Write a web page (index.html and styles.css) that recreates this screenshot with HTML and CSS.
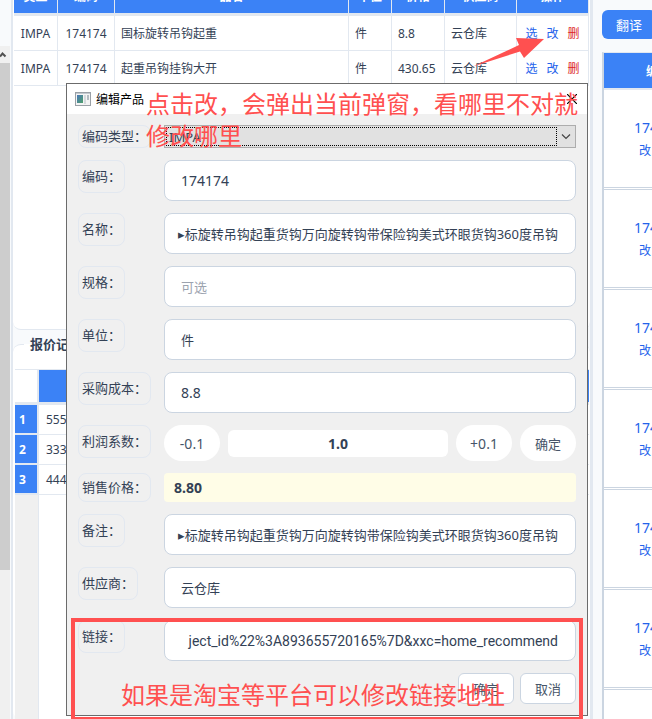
FILE: index.html
```html
<!DOCTYPE html>
<html lang="zh-CN">
<head>
  <meta charset="UTF-8">
  <title>编辑产品</title>
  <meta name="viewport" content="width=device-width, initial-scale=1.0">
  <link rel="stylesheet" href="styles.css">
</head>
<body>
  <div class="app">
    <!-- 左侧滚动条 -->
    <div class="scrollbar">
      <div class="scroll-up">
        <svg width="10" height="17" viewBox="0 0 10 17"><path d="M0 10.500 2.500 7.500 5.500 10.500" fill="none" stroke="#505050" stroke-width="2"/></svg>
      </div>
      <div class="scroll-thumb"></div>
    </div>

    <main class="main">
      <section class="products">
        <table class="product-table">
          <thead>
            <tr>
              <th class="c-type">类型</th>
              <th class="c-code">编码</th>
              <th>品名</th>
              <th class="c-unit">单位</th>
              <th class="c-price">价格</th>
              <th class="c-supplier">供应商</th>
              <th class="c-action">操作</th>
            </tr>
          </thead>
          <tbody>
            <tr>
              <td class="center">IMPA</td>
              <td class="center">174174</td>
              <td>国标旋转吊钩起重</td>
              <td>件</td>
              <td>8.8</td>
              <td>云仓库</td>
              <td><div class="actions"><a href="#">选</a><a href="#">改</a><a href="#" class="del">删</a></div></td>
            </tr>
            <tr>
              <td class="center">IMPA</td>
              <td class="center">174174</td>
              <td>起重吊钩挂钩大开</td>
              <td>件</td>
              <td>430.65</td>
              <td>云仓库</td>
              <td><div class="actions"><a href="#">选</a><a href="#">改</a><a href="#" class="del">删</a></div></td>
            </tr>
          </tbody>
        </table>
      </section>

      <fieldset class="quotes">
        <legend>报价记录</legend>
        <table class="quote-table">
          <thead>
            <tr><td class="corner"></td><th></th></tr>
          </thead>
          <tbody>
            <tr><th scope="row">1</th><td>555</td></tr>
            <tr><th scope="row">2</th><td>333</td></tr>
            <tr><th scope="row">3</th><td>444</td></tr>
          </tbody>
        </table>
        <div class="quote-rest"></div>
      </fieldset>
    </main>

    <aside class="side">
      <button type="button" class="translate">翻译</button>
      <table class="side-table">
        <thead><tr><th>编码</th></tr></thead>
        <tbody>
          <tr><td><a href="#" class="code">174174</a><div class="actions"><a href="#">改</a><a href="#" class="del">删</a></div></td></tr>
          <tr><td><a href="#" class="code">174174</a><div class="actions"><a href="#">改</a><a href="#" class="del">删</a></div></td></tr>
          <tr><td><a href="#" class="code">174174</a><div class="actions"><a href="#">改</a><a href="#" class="del">删</a></div></td></tr>
          <tr><td><a href="#" class="code">174174</a><div class="actions"><a href="#">改</a><a href="#" class="del">删</a></div></td></tr>
          <tr><td><a href="#" class="code">174174</a><div class="actions"><a href="#">改</a><a href="#" class="del">删</a></div></td></tr>
          <tr><td><a href="#" class="code">174174</a><div class="actions"><a href="#">改</a><a href="#" class="del">删</a></div></td></tr>
          <tr><td></td></tr>
        </tbody>
      </table>
    </aside>

    <!-- 编辑弹窗 -->
    <div class="dialog" role="dialog" aria-labelledby="dialog-title">
      <div class="title-bar">
        <svg class="win-icon" width="16" height="14" viewBox="0 0 16 14">
          <defs>
            <linearGradient id="pane" x1="0" y1="0" x2="1" y2="1">
              <stop offset="0" stop-color="#4a78b8"/>
              <stop offset="1" stop-color="#4fa06a"/>
            </linearGradient>
          </defs>
          <rect x="0.500" y="0.500" width="15" height="13" fill="#f4f4f4" stroke="#9aa0a6"/>
          <rect x="1" y="1" width="14" height="1" fill="#c3c9cf"/>
          <rect x="2" y="3" width="6" height="8" fill="url(#pane)"/>
          <rect x="9" y="3" width="2" height="9" fill="#d5dadd"/>
          <rect x="12" y="3" width="2" height="5" fill="#b4bcc2"/>
        </svg>
        <h1 id="dialog-title">编辑产品</h1>
        <button type="button" class="close" aria-label="关闭">
          <svg width="10" height="10" viewBox="0 0 10 10"><path d="M0 0 10 10M10 0 0 10" stroke="#000" stroke-width="1.200"/></svg>
        </button>
      </div>

      <form class="form">
        <label class="label short" for="type">编码类型：</label>
        <div class="combo">
          <select id="type"><option>IMPA</option></select>
          <svg width="18" height="17" viewBox="0 0 18 17"><path d="M5 6.500 9 10.500 13 6.500" fill="none" stroke="#444" stroke-width="1.200"/></svg>
        </div>

        <label class="label" for="code">编码：</label>
        <input class="input latin" id="code" type="text" value="174174">

        <label class="label" for="name">名称：</label>
        <input class="input tail" id="name" type="text" value="▸标旋转吊钩起重货钩万向旋转钩带保险钩美式环眼货钩360度吊钩">

        <label class="label" for="spec">规格：</label>
        <input class="input" id="spec" type="text" placeholder="可选">

        <label class="label" for="unit">单位：</label>
        <input class="input" id="unit" type="text" value="件">

        <label class="label" for="cost">采购成本：</label>
        <input class="input latin" id="cost" type="text" value="8.8">

        <label class="label" for="rate">利润系数：</label>
        <div class="stepper">
          <button type="button" class="pill latin">-0.1</button>
          <input class="rate" id="rate" type="text" value="1.0">
          <button type="button" class="pill latin">+0.1</button>
          <button type="button" class="pill">确定</button>
        </div>

        <label class="label mid" for="price">销售价格：</label>
        <output class="price" id="price">8.80</output>

        <label class="label" for="remark">备注：</label>
        <input class="input tail" id="remark" type="text" value="▸标旋转吊钩起重货钩万向旋转钩带保险钩美式环眼货钩360度吊钩">

        <label class="label" for="supplier">供应商：</label>
        <input class="input" id="supplier" type="text" value="云仓库">

        <label class="label" for="link">链接：</label>
        <input class="input tail url" id="link" type="text" value="ject_id%22%3A893655720165%7D&amp;xxc=home_recommend">

        <div class="buttons">
          <button type="button" class="btn">确定</button>
          <button type="button" class="btn">取消</button>
        </div>
      </form>
    </div>

    <!-- 标注 -->
    <svg class="arrow" width="74" height="32" viewBox="0 0 74 32"><path d="M73 4 45 3 48 10 2 31.500 49 16.500 53 23Z" fill="#ff5050"/></svg>
    <p class="note note-top">点击改，会弹出当前弹窗，看哪里不对就修改哪里</p>
    <div class="frame"></div>
    <p class="note note-bottom">如果是淘宝等平台可以修改链接地址</p>
  </div>
</body>
</html>
```

FILE: styles.css
```css
* { margin: 0; padding: 0; box-sizing: border-box; }
html, body {
  height: 100%;
}
body {
  font-family: "Noto Sans", "Noto Sans CJK SC", sans-serif;
  font-size: 12px;
  color: #334155;
  background: #f8fafc;
  overflow: hidden;
}
button, input, select {
  font-family: inherit;
  font-size: 13px;
  color: inherit;
}
a {
  color: #2563eb;
  text-decoration: none;
}
a.del { color: #dc2626; }
table {
  width: 100%;
  border-collapse: separate;
  border-spacing: 0;
  table-layout: fixed;
}

.app {
  position: relative;
  display: flex;
  height: 100%;
  overflow: hidden;
}

/* 左侧滚动条 */
.scrollbar {
  display: flex;
  flex-direction: column;
  width: 10px;
  margin-top: 46px;
  background: #f0f0f0;
}
.scroll-up { height: 17px; }
.scroll-up svg { display: block; }
.scroll-thumb {
  height: 507px;
  background: #cdcdcd;
}

/* 中间区域 */
.main {
  flex: 1;
  display: flex;
  flex-direction: column;
  min-width: 0;
  margin-left: 1px;
  border-left: 2px solid #e2e8f0;
  border-right: 3px solid #e2e8f0;
}
.products {
  height: 330px;
  padding: 0 1px;
  background: #fff;
  border-bottom: 1px solid #e2e8f0;
  border-radius: 0 0 8px 8px;
  overflow: hidden;
}
.product-table { margin-top: -19px; }
.product-table th {
  height: 35px;
  line-height: 32px;
  background: #3b82f6;
  color: #fff;
  border-right: 1px solid #e2e8f0;
  border-bottom: 3px solid #e2e8f0;
}
.product-table td {
  height: 35px;
  padding: 0 6px;
  border-right: 1px solid #e2e8f0;
  border-bottom: 1px solid #e2e8f0;
  white-space: nowrap;
}
.product-table .center {
  padding: 0;
  text-align: center;
}
.c-type { width: 44px; }
.c-code { width: 57px; }
.c-unit { width: 43px; }
.c-price { width: 53px; }
.c-supplier { width: 72px; }
.c-action { width: 72px; }
.actions {
  display: flex;
  justify-content: center;
  gap: 9px;
}

.quotes {
  flex: 1;
  display: flex;
  flex-direction: column;
  min-width: 0;
  margin-top: 5px;
  padding: 16px 1px 0 2px;
  background: #fff;
  border: none;
  border-top: 1px solid #e2e8f0;
  border-radius: 8px;
}
.quotes legend {
  margin-left: 9px;
  padding: 0 6px;
  line-height: 18px;
  font-size: 13px;
  font-weight: bold;
}
.quote-table thead td,
.quote-table thead th {
  height: 36px;
  border-top: 1px solid #e2e8f0;
  border-bottom: 3px solid #e2e8f0;
}
.quote-table .corner {
  width: 24px;
  border-right: 2px solid #e2e8f0;
}
.quote-table thead th { background: #3b82f6; }
.quote-table tbody th {
  height: 30px;
  padding-left: 4px;
  background: #3b82f6;
  color: #fff;
  text-align: left;
  border-right: 2px solid #e2e8f0;
  border-bottom: 2px solid #e2e8f0;
}
.quote-table tbody td {
  padding-left: 7px;
  border-bottom: 1px solid #e2e8f0;
}
.quote-rest {
  flex: 1;
  width: 24px;
  background: #f0f0f0;
  border-right: 1px solid #e2e8f0;
}

/* 右侧列表，超出部分裁掉 */
.side {
  flex: 0 0 59px;
  padding-top: 10px;
  padding-left: 9px;
  overflow: hidden;
}
.side .translate {
  display: block;
  width: 54px;
  height: 29px;
  margin-bottom: 13px;
  background: #3b82f6;
  color: #fff;
  border: none;
  border-radius: 6px;
}
.side-table {
  width: 110px;
  border-top: 1px solid #e2e8f0;
  border-left: 2px solid #cbd5e1;
  background: #fff;
}
.side-table th {
  height: 37px;
  background: #3b82f6;
  color: #fff;
  border-bottom: 2px solid #e2e8f0;
}
.side-table td {
  height: 100px;
  line-height: 23px;
  text-align: center;
  border-bottom: 3px double #cbd5e1;
}
.side-table .code {
  display: block;
  font-size: 14px;
}
.side-table .actions { gap: 14px; }

/* 弹窗 */
.dialog {
  position: absolute;
  top: 83px;
  left: 66px;
  right: 64px;
  background: #f0f0f0;
  border: 1px solid #6b6b6b;
}
.title-bar {
  display: flex;
  align-items: center;
  gap: 5px;
  height: 30px;
  padding: 0 10px 0 8px;
  background: #fff;
}
.title-bar h1 {
  flex: 1;
  font-size: 12px;
  font-weight: normal;
  color: #000;
}
.close {
  display: flex;
  border: none;
  background: none;
}
.form {
  display: grid;
  grid-template-columns: 86px 1fr;
  row-gap: 12px;
  align-items: start;
  padding: 11px;
}
.label {
  justify-self: start;
  height: 33px;
  padding: 0 3px;
  line-height: 31px;
  font-size: 13px;
  border: 1px solid #e2e8f0;
  border-radius: 8px;
  white-space: nowrap;
}
.label.short {
  height: 23px;
  line-height: 21px;
}
.label.mid {
  height: 29px;
  line-height: 27px;
}
.combo {
  display: flex;
  align-items: center;
  height: 23px;
  background: #e1e1e1;
  border: 1px solid #adadad;
}
.combo select {
  flex: 1;
  height: 19px;
  margin-left: 1px;
  padding-left: 2px;
  appearance: none;
  background: none;
  border: 1px dotted #000;
}
.input {
  width: 100%;
  min-width: 0;
  height: 41px;
  padding: 0 16px;
  background: #fff;
  border: 1px solid #cbd5e1;
  border-radius: 8px;
}
.input::placeholder { color: #9ca3af; }
.input.tail {
  padding: 0 17px 0 8px;
  text-align: right;
}
.latin { font-size: 14px; }
.url {
  font-family: Roboto, "Noto Sans", sans-serif;
  font-size: 14px;
}
.stepper {
  display: flex;
  align-items: center;
  gap: 8px;
}
.pill {
  width: 56px;
  height: 36px;
  background: #fff;
  color: #475569;
  border: none;
  border-radius: 18px;
}
.rate {
  flex: 1;
  min-width: 0;
  height: 27px;
  border: none;
  border-radius: 6px;
  background: #fff;
  font-size: 14px;
  font-weight: bold;
  text-align: center;
}
.price {
  height: 29px;
  padding-left: 10px;
  line-height: 29px;
  font-size: 14px;
  font-weight: bold;
  background: #fffde7;
  border-radius: 4px;
}
.buttons {
  grid-column: 1 / -1;
  display: flex;
  justify-content: flex-end;
  gap: 6px;
}
.btn {
  width: 56px;
  height: 31px;
  background: #fff;
  color: #475569;
  border: 1px solid #cbd5e1;
  border-radius: 6px;
}

/* 红色标注 */
.arrow {
  position: absolute;
  top: 35px;
  right: 107px;
}
.note {
  position: absolute;
  font-family: "Noto Sans CJK SC", sans-serif;
  font-size: 24px;
  font-weight: 400;
  line-height: 32px;
  color: #ff5050;
}
.note-top {
  top: 87px;
  left: 146px;
  right: 72px;
}
.note-bottom {
  top: 678px;
  left: 121px;
}
.frame {
  position: absolute;
  top: 618px;
  left: 71px;
  right: 69px;
  height: 103px;
  border: 4px solid #ff5050;
}
```
